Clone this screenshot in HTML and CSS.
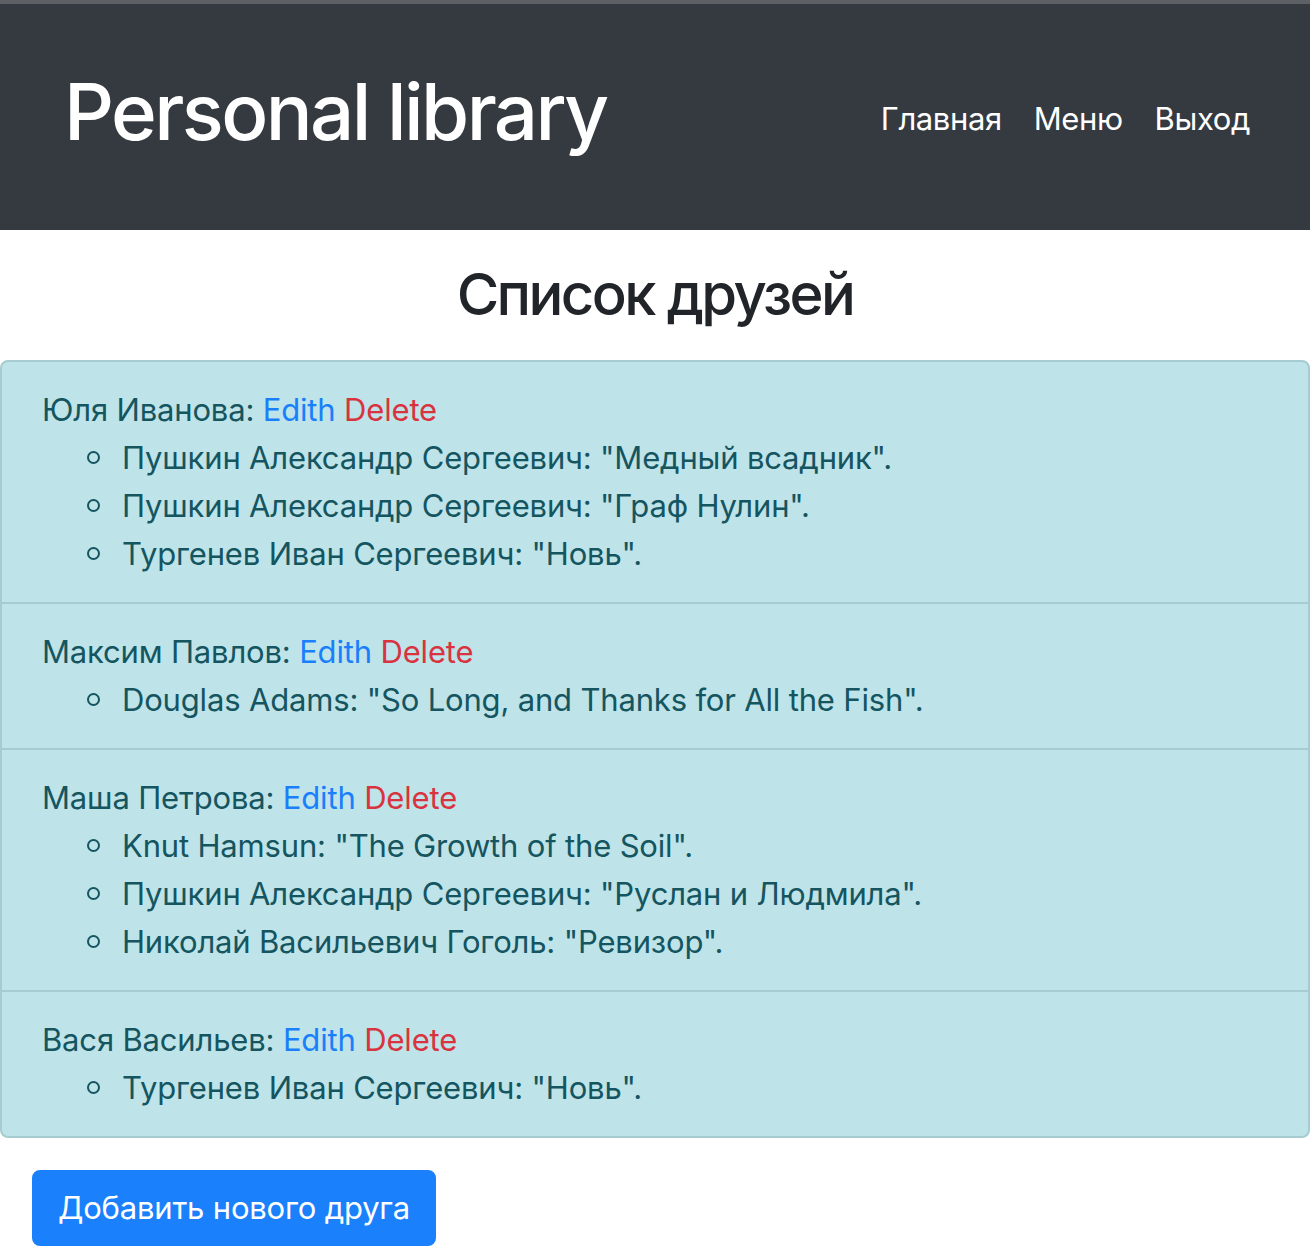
FILE: index.html
```html
<!DOCTYPE html>
<html lang="ru">
<head>
<meta charset="utf-8">
<title>Personal library</title>
<link rel="stylesheet" href="styles.css">
</head>
<body>
<header class="navbar">
  <h1 class="brand">Personal library</h1>
  <nav class="nav">
    <a class="nav-link" href="#">Главная</a>
    <a class="nav-link" href="#">Меню</a>
    <a class="nav-link" href="#">Выход</a>
  </nav>
</header>
<main>
  <h2 class="title">Список друзей</h2>
  <ul class="list-group">
    <li class="list-item">
      <div>Юля Иванова: <a class="edit" href="#">Edith</a> <a class="delete" href="#">Delete</a></div>
      <ul class="books">
        <li>Пушкин Александр Сергеевич: "Медный всадник".</li>
        <li>Пушкин Александр Сергеевич: "Граф Нулин".</li>
        <li>Тургенев Иван Сергеевич: "Новь".</li>
      </ul>
    </li>
    <li class="list-item">
      <div>Максим Павлов: <a class="edit" href="#">Edith</a> <a class="delete" href="#">Delete</a></div>
      <ul class="books">
        <li>Douglas Adams: "So Long, and Thanks for All the Fish".</li>
      </ul>
    </li>
    <li class="list-item">
      <div>Маша Петрова: <a class="edit" href="#">Edith</a> <a class="delete" href="#">Delete</a></div>
      <ul class="books">
        <li>Knut Hamsun: "The Growth of the Soil".</li>
        <li>Пушкин Александр Сергеевич: "Руслан и Людмила".</li>
        <li>Николай Васильевич Гоголь: "Ревизор".</li>
      </ul>
    </li>
    <li class="list-item">
      <div>Вася Васильев: <a class="edit" href="#">Edith</a> <a class="delete" href="#">Delete</a></div>
      <ul class="books">
        <li>Тургенев Иван Сергеевич: "Новь".</li>
      </ul>
    </li>
  </ul>
  <div class="actions">
    <a class="btn" href="#">Добавить нового друга</a>
  </div>
</main>
</body>
</html>
```

FILE: styles.css
```css
*, *::before, *::after { box-sizing: border-box; }

html, body {
  margin: 0;
  padding: 0;
  background: #ffffff;
}

body {
  font-family: Inter, "Noto Sans", "Liberation Sans", sans-serif;
  font-size: 31px;
  line-height: 48px;
  color: #212529;
  letter-spacing: -0.17px;
}

a { text-decoration: none; }

.navbar {
  height: 230px;
  border-top: 4px solid #5d6166;
  background: #353a41;
  display: flex;
  align-items: center;
  justify-content: space-between;
  padding: 0 44px 0 64px;
}

.brand {
  margin: 0 0 11px 0;
  font-size: 78px;
  line-height: 94px;
  font-weight: 500;
  color: #ffffff;
  letter-spacing: -2.6px;
}

.nav {
  display: flex;
  margin-top: 3px;
}

.nav-link {
  color: #ffffff;
  padding: 0 16px;
  font-size: 31px;
  line-height: 48px;
  letter-spacing: -0.4px;
}

.title {
  margin: 29px 0 31px;
  text-align: center;
  font-size: 58px;
  line-height: 70px;
  font-weight: 500;
  color: #212529;
  letter-spacing: -2.6px;
}

.list-group {
  list-style: none;
  margin: 0;
  padding: 0;
  border: 2px solid #a6cbd1;
  border-radius: 8px;
  background: #bee3e9;
  color: #145560;
}

.list-item {
  padding: 24px 40px;
  border-top: 2px solid #a6cbd1;
}

.list-item:first-child { border-top: none; }

.edit { color: #1a7ffa; }
.delete { color: #d9333f; }

.books {
  list-style: none;
  margin: 0;
  padding-left: 80px;
}

.books li::before {
  content: "";
  display: inline-block;
  width: 13px;
  height: 13px;
  margin-left: -35px;
  margin-right: 22px;
  border: 2.5px solid #145560;
  border-radius: 50%;
  vertical-align: 5px;
}

.actions {
  padding: 32px 32px 0;
}

.btn {
  display: inline-block;
  background: #1a80fb;
  border: 2px solid #1a80fb;
  color: #ffffff;
  border-radius: 8px;
  padding: 12px 24px;
  font-size: 31px;
  line-height: 48px;
  letter-spacing: -0.2px;
}
```
